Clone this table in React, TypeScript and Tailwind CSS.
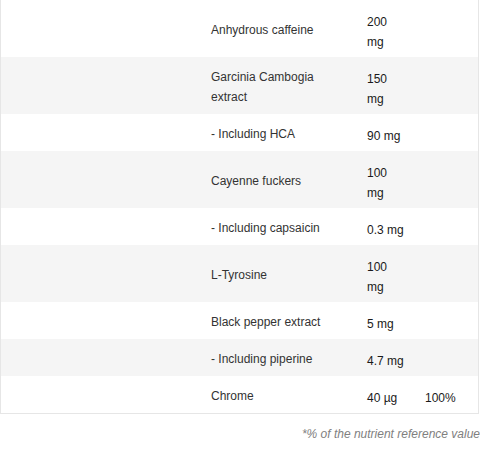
const rows = [
  { name: "Anhydrous caffeine", value: "200 mg", rda: "" },
  { name: "Garcinia Cambogia extract", value: "150 mg", rda: "" },
  { name: "- Including HCA", value: "90 mg", rda: "" },
  { name: "Cayenne fuckers", value: "100 mg", rda: "" },
  { name: "- Including capsaicin", value: "0.3 mg", rda: "" },
  { name: "L-Tyrosine", value: "100 mg", rda: "" },
  { name: "Black pepper extract", value: "5 mg", rda: "" },
  { name: "- Including piperine", value: "4.7 mg", rda: "" },
  { name: "Chrome", value: "40 µg", rda: "100%" },
];

export default function App() {
  return (
    <div className="w-[480px] h-[449px] bg-white font-['Liberation_Sans',Arial,sans-serif] text-[12px] leading-[20px]">
      <div className="w-[479px] border-x border-b border-[#e6e6e6]">
        {rows.map((row, i) => (
          <div
            key={row.name}
            className={`grid grid-cols-[210px_156px_58px_1fr] items-center ${
              i % 2 === 1 ? "bg-[#f5f5f5]" : "bg-white"
            }`}
          >
            <div />
            <div className="pt-[2px] pr-5 text-[#333]">{row.name}</div>
            <div className="w-[38px] pt-[12px] pb-[5px] text-[#1a1a1a]">{row.value}</div>
            <div className="pt-[12px] pb-[5px] text-[#1a1a1a]">{row.rda}</div>
          </div>
        ))}
      </div>
      <p className="mt-[10px] text-right italic text-[#808080]">
        *% of the nutrient reference value
      </p>
    </div>
  );
}
